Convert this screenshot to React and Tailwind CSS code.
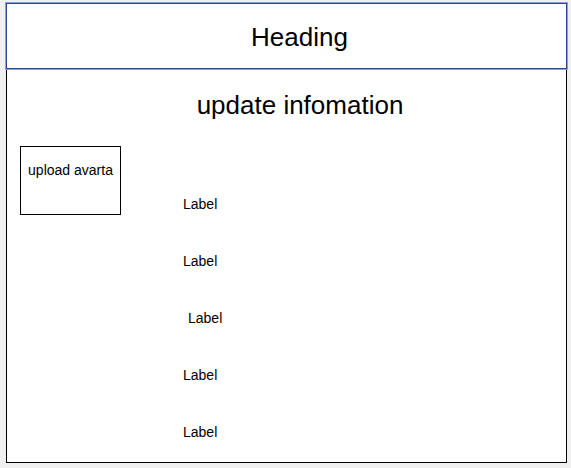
import React from "react";

const labels = [0, 0, 5, 0, 0];

export default function App() {
  return (
    <div
      className="w-[571px] h-[468px] bg-[#f0f0f0] pt-[2px] pl-[5px] overflow-hidden text-black"
      style={{ fontFamily: '"Liberation Sans", Arial, sans-serif' }}
    >
      {/* heading bar */}
      <div className="w-[563px] h-[68px] bg-white border border-[#8d9ed6] shadow-[inset_0_0_0_1px_#2c4696] flex items-center justify-center pl-[26px]">
        <h1 className="text-[26px] leading-[30px] pt-[2px]">Heading</h1>
      </div>

      {/* form area */}
      <div className="ml-[1px] w-[561px] h-[393px] bg-white border border-black border-t-0 flex flex-col">
        <h2 className="text-[26px] leading-[30px] text-center pt-[20px] pl-[27px]">update infomation</h2>
        <div className="flex items-start mt-[26px] pl-[13px]">
          <div className="w-[101px] h-[69px] border border-black flex justify-center pt-[15px] text-[14px] leading-[16px]">
            upload avarta
          </div>
          <div className="flex flex-col gap-[41px] pt-[50px] ml-[62px]">
            {labels.map((off, i) => (
              <span key={i} className={`text-[14px] leading-[16px] ${off ? "ml-[5px]" : ""}`}>
                Label
              </span>
            ))}
          </div>
        </div>
      </div>
    </div>
  );
}
